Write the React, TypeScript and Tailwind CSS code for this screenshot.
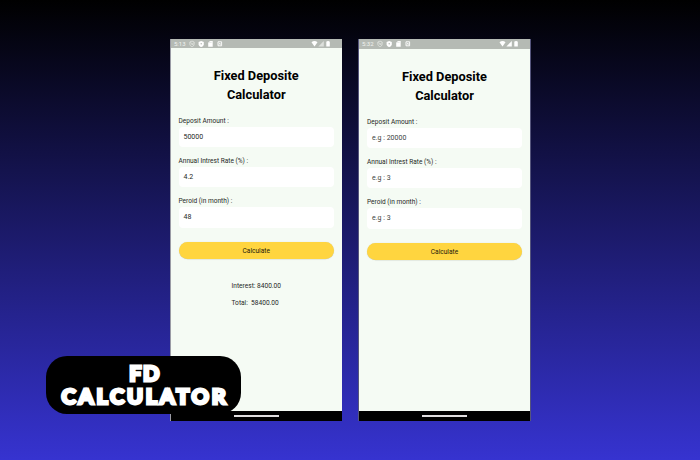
interface PhoneProps {
  time: string;
  values: string[];
  results?: boolean;
  second?: boolean;
}

const labels = ["Deposit Amount :", "Annual Intrest Rate (%) :", "Peroid (in month) :"];

function StatusBar({ time, second }: { time: string; second?: boolean }) {
  return (
    <div
      className={`flex shrink-0 items-center justify-between bg-[#b5bab4] pr-[11px] text-white ${
        second ? "h-[10px] pl-[3px]" : "h-[9px] pl-[3px]"
      }`}
    >
      <div className="flex items-center">
        <span className="w-[15px] text-[6px] leading-[8px] text-[#f0f2ef]">{time}</span>
        <svg width="50" height="8" viewBox="0 0 50 8" fill="none">
          <path d="M.8 2 3 1.1 5.2 2v2.1C5.2 5.5 4.2 6.2 3 6.7 1.8 6.2.8 5.5.8 4.1zM1.2 2l3.7 3.5M2 3.6l1 1 1.7-2" stroke="#e5e8e4" strokeWidth=".7" />
          <path d="M9.6 1.9 12.2.9l2.6 1v2.3c0 1.5-1.2 2.4-2.6 2.9-1.4-.5-2.6-1.4-2.6-2.9z" fill="#fff" />
          <circle cx="12.2" cy="3.7" r=".7" fill="#aeb3ad" />
          <path d="M19.2 2.7 20.9 1h2.8v5.8h-4.5z" fill="#fff" />
          <path d="M20.8 1.8v1M22 1.8v1" stroke="#b5bab4" strokeWidth=".5" />
          <path d="M29 1.8h3.6v4H29z" stroke="#fff" strokeWidth=".9" />
          <path d="M30 4.7 30.8 3l.8 1.7" stroke="#fff" strokeWidth=".7" />
        </svg>
      </div>
      <svg width="20" height="8" viewBox="0 0 20 8" fill="#fff">
        <path d="M.5 2.2Q3.5-.3 6.5 2.2L3.5 6.4z" />
        <path d="M12.8 1v5.4H7.4z" fill={second ? "#fff" : "#dde0dc"} />
        <path d="M15.3 1.5h1V.9h1.5v.6h1v5.1h-3.5z" />
      </svg>
    </div>
  );
}

function Phone({ time, values, results, second }: PhoneProps) {
  return (
    <section
      className={`flex h-[382px] flex-col bg-[#f5fbf4] ${
        second ? "w-[173px] border-x border-[#55557c]" : "w-[172px] border-l border-[#9a9ba5]"
      }`}
    >
      <StatusBar time={time} second={second} />
      <div className={`flex flex-1 flex-col pr-[8px] ${second ? "pl-[8px]" : "pl-[7.5px]"}`}>
        <h1 className="mt-[19px] pt-[0.3px] text-center text-[12.8px] leading-[18.2px] font-bold text-black">
          Fixed Deposite
          <br />
          Calculator
        </h1>
        <div className="mt-[11.6px]">
          {labels.map((label, i) => (
            <div key={label} className="h-[40.2px]">
              <div className="h-[11.4px] pt-[0.7px] text-[6.55px] leading-[11px] text-[#252825]">{label}</div>
              <div
                className={`flex h-[20.6px] items-center rounded-[4px] bg-white pt-[0.4px] pl-[5px] text-[7px] ${
                  second ? "text-[#3d433d]" : "text-[#252825]"
                }`}
              >
                {values[i]}
              </div>
            </div>
          ))}
        </div>
        <button className="mt-[6px] h-[17px] rounded-full bg-[#ffd53f] pt-[0.8px] text-[6.6px] leading-[16.2px] text-[#1d1b0c] shadow-[0_0.3px_0.8px_rgba(60,60,40,0.3)]">
          Calculate
        </button>
        {results && (
          <div className="mt-[19.3px] pl-[53px] text-[6.6px] leading-[17.3px] whitespace-pre text-[#252825]">
            <p>Interest: 8400.00</p>
            <p>{"Total:  58400.00"}</p>
          </div>
        )}
      </div>
      <div className="flex h-[10.5px] shrink-0 items-center justify-center bg-black">
        <div className="h-[2px] w-[45px] bg-[#e0dedf]" />
      </div>
    </section>
  );
}

export default function App() {
  return (
    <main className="relative h-[460px] w-[700px] overflow-hidden bg-[linear-gradient(to_bottom,#000000,#3633d0)] font-['Roboto',sans-serif]">
      <div className="flex gap-[16px] pt-[39px] pl-[170px]">
        <Phone time="5:13" values={["50000", "4.2", "48"]} results />
        <Phone time="5:32" values={["e.g : 20000", "e.g : 3", "e.g : 3"]} second />
      </div>
      <div className="absolute top-[356px] left-[46px] flex h-[58px] w-[195px] flex-col items-center rounded-[21px] bg-black pt-[5.5px] text-center font-['Lato',sans-serif] text-[21.5px] leading-[23px] font-black tracking-[2.8px] text-white [-webkit-text-stroke:2.8px_white]">
        <span className="pl-[3px] tracking-[1.6px]">FD</span>
        <span className="pl-[3px]">CALCULATOR</span>
      </div>
    </main>
  );
}
